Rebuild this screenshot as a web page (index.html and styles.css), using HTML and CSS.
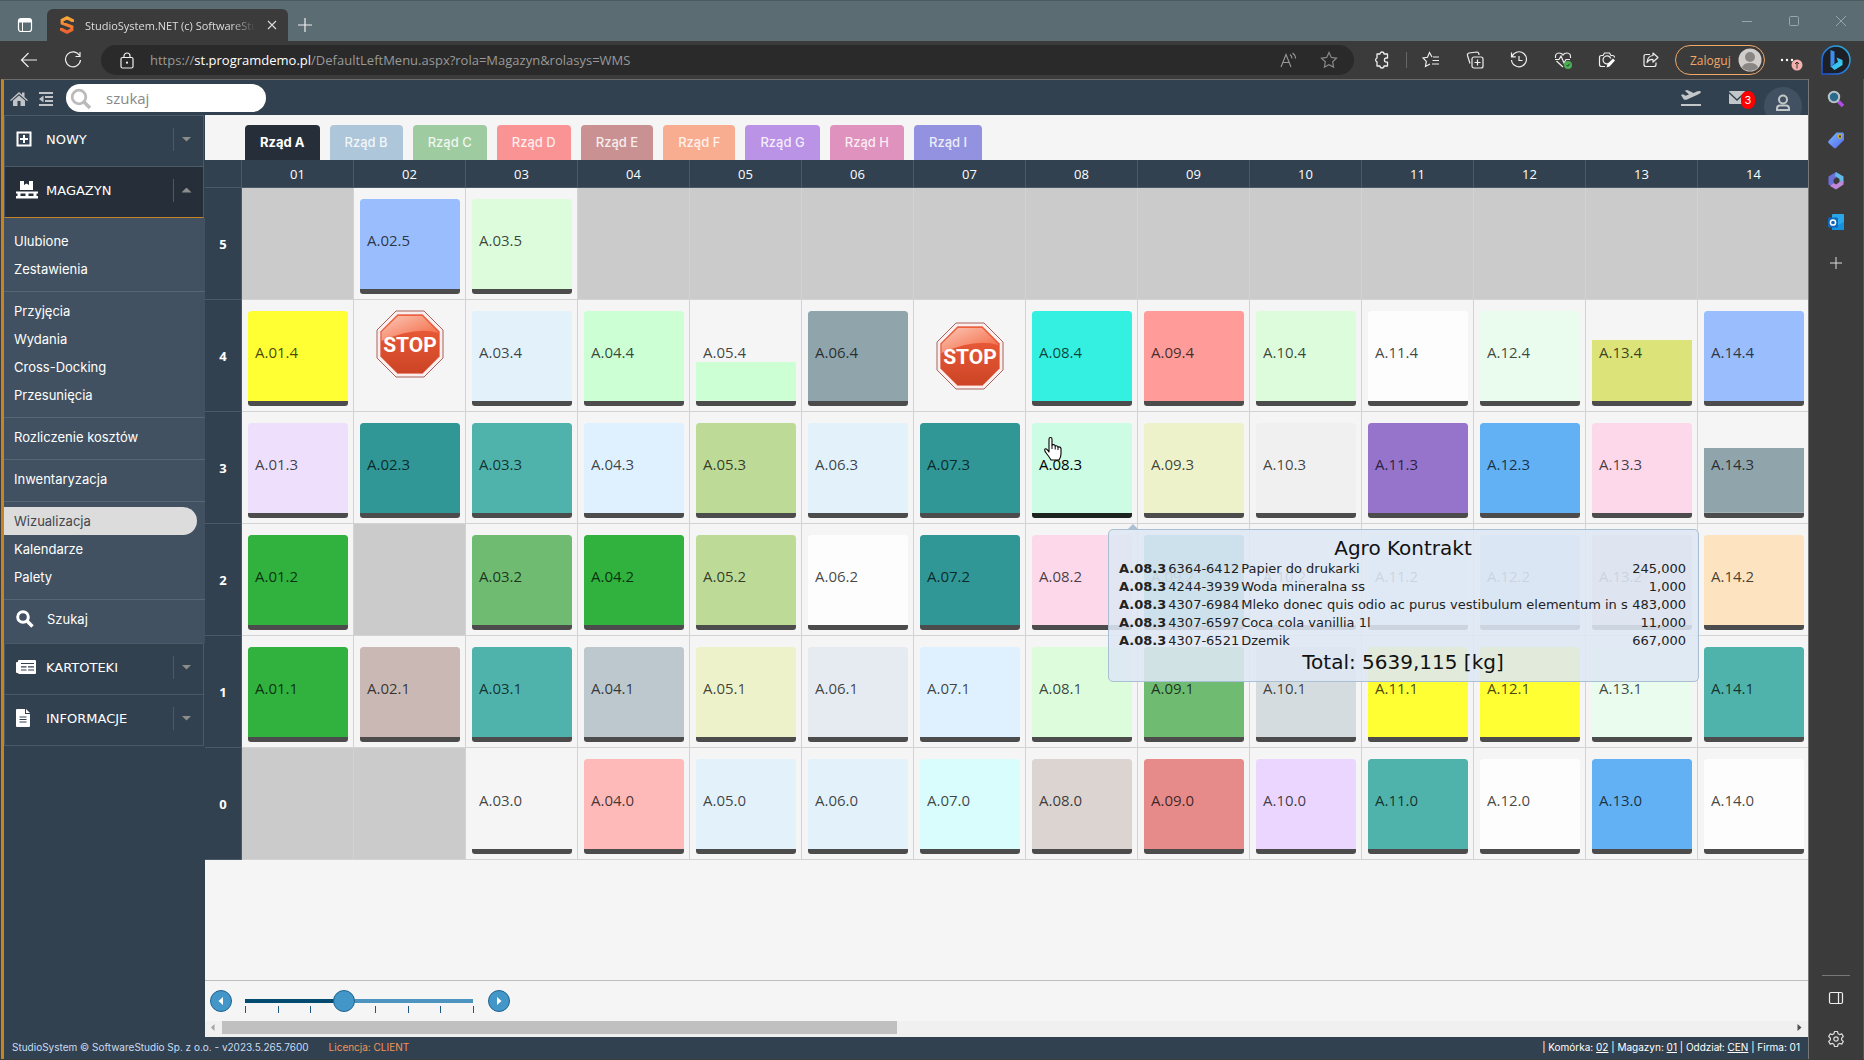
FILE: index.html
```html
<!DOCTYPE html>
<html lang="pl">
<head>
<meta charset="utf-8">
<title>StudioSystem.NET (c) SoftwareStudio</title>
<meta name="viewport" content="width=device-width, initial-scale=1">
<link rel="stylesheet" href="styles.css">
</head>
<body>
<div class="titlebar">
  <button class="icon-btn tab-menu" aria-label="Karty"><svg width="16" height="16" viewBox="0 0 16 16"><rect x="1.5" y="1.5" width="13" height="13" rx="2.5" fill="none" stroke="#fff" stroke-width="1.2"/><path d="M2 2h12v3.500H2z" fill="#fff"/><path d="M5.500 5v9" stroke="#fff"/></svg></button>
  <div class="tab">
    <svg width="14" height="18" viewBox="0 0 14 18"><defs><linearGradient id="fav" x1="0" y1="0" x2="0" y2="1"><stop offset="0" stop-color="#f8a838"/><stop offset="1" stop-color="#ee6030"/></linearGradient></defs><path d="M12.500 6V4.500L7 1.800 2.200 4.200v3l9.600 3.600v3L7 16.200l-5.500-2.700V12" fill="none" stroke="url(#fav)" stroke-width="3.200"/></svg>
    <span class="tab-title">StudioSystem.NET (c) SoftwareStudio</span>
    <button class="tab-close" aria-label="Zamknij kartę"><svg width="10" height="10" viewBox="0 0 10 10"><path d="M1 1l8 8M9 1L1 9" stroke="#ddd" stroke-width="1.100"/></svg></button>
  </div>
  <button class="icon-btn" aria-label="Nowa karta"><svg width="14" height="14" viewBox="0 0 14 14"><path d="M7 0v14M0 7h14" stroke="#eee" stroke-width="1.200"/></svg></button>
  <div class="window-controls">
    <button aria-label="Minimalizuj"><svg width="12" height="12" viewBox="0 0 12 12"><path d="M1 6.500h10" stroke="#9ba6a9"/></svg></button>
    <button aria-label="Maksymalizuj"><svg width="12" height="12" viewBox="0 0 12 12"><rect x="1.500" y="1.500" width="9" height="9" rx="1" fill="none" stroke="#9ba6a9"/></svg></button>
    <button aria-label="Zamknij"><svg width="12" height="12" viewBox="0 0 12 12"><path d="M1 1l10 10M11 1L1 11" stroke="#9ba6a9"/></svg></button>
  </div>
</div>

<div class="toolbar">
  <button class="icon-btn" aria-label="Wstecz"><svg width="18" height="16" viewBox="0 0 18 16"><path d="M17 8H1.500M8.500 1l-7 7 7 7" fill="none" stroke="#eee" stroke-width="1.200"/></svg></button>
  <button class="icon-btn" aria-label="Odśwież"><svg width="18" height="18" viewBox="0 0 18 18"><path d="M15.500 4.500A7.500 7.500 0 1 0 16.500 9M16 1v4.500h-4.500" fill="none" stroke="#eee" stroke-width="1.200"/></svg></button>
  <div class="address">
    <svg width="14" height="17" viewBox="0 0 14 17"><rect x="1" y="5.500" width="12" height="10.500" rx="1.500" fill="none" stroke="#eee" stroke-width="1.200"/><path d="M4 5.500V4a3 3 0 0 1 6 0v1.500" fill="none" stroke="#eee" stroke-width="1.200"/><circle cx="7" cy="10.700" r="1.100" fill="#eee"/></svg>
    <span class="url">https://<b>st.programdemo.pl</b>/DefaultLeftMenu.aspx?rola=Magazyn&amp;rolasys=WMS</span>
    <svg width="18" height="16" viewBox="0 0 18 16" fill="none" stroke="#999" stroke-width="1.100"><path d="M1 15L6 2.500 11 15M2.800 10.500h6.400M10 2.500q2 1.500 2 4M12.500 1q3 2 3 5.500"/></svg>
    <svg width="18" height="18" viewBox="0 0 18 18"><path d="M9 1.500l2.300 4.900 5.200.7-3.800 3.700.9 5.300L9 13.600l-4.600 2.500.9-5.300L1.500 7.100l5.200-.7z" fill="none" stroke="#888" stroke-width="1.200"/></svg>
  </div>
  <button class="icon-btn puzzle" aria-label="Rozszerzenia"><svg width="18" height="18" viewBox="0 0 18 18"><path d="M4 3h3a2 2 0 0 1 4 0h3.500v4h-1a2 2 0 0 0 0 4.200h1V15H11a2 2 0 0 1-4 0H4v-4.200a2 2 0 0 1 0-3.800z" fill="none" stroke="#eee" stroke-width="1.300" stroke-linejoin="round"/></svg></button>
  <span class="divider"></span>
  <button class="icon-btn" aria-label="Ulubione"><svg width="18" height="18" viewBox="0 0 18 18"><path d="M10 6L7.500 1.500 5.500 6.300 1 7l3.300 3.400-.8 5.100L8 13M11 6h6M10.500 9.500H17M10 13h7" fill="none" stroke="#eee" stroke-width="1.200"/></svg></button>
  <button class="icon-btn" aria-label="Kolekcje"><svg width="18" height="18" viewBox="0 0 18 18" fill="none" stroke="#eee" stroke-width="1.200"><rect x="6" y="6" width="11" height="11" rx="2"/><path d="M11.500 8.500v6M8.500 11.500h6M4 12.500L1.500 4.500Q1 2.500 3 2l8-1q2 0 2 3"/></svg></button>
  <button class="icon-btn" aria-label="Historia"><svg width="18" height="18" viewBox="0 0 18 18" fill="none" stroke="#eee" stroke-width="1.200"><path d="M2 5.500A7.500 7.500 0 1 1 1.500 9M1.500 1.500v4.300h4.300M9 5v4.500h3.500"/></svg></button>
  <button class="icon-btn" aria-label="Wydajność"><svg width="19" height="18" viewBox="0 0 19 18"><path d="M1.500 7Q1 2 5 2q3 0 4 2 1-2 4-2 4 0 3.500 5M2.500 10L9 16M1 8.500h4l2-3.500 3 7 2-3.500h4" fill="none" stroke="#eee" stroke-width="1.200"/><circle cx="14" cy="14" r="4" fill="#4caf50"/><path d="M12.500 14l1.200 1.200 2-2.500" fill="none" stroke="#234"/></svg></button>
  <button class="icon-btn" aria-label="Zrzut ekranu"><svg width="18" height="18" viewBox="0 0 18 18"><path d="M7 15.500H3.500q-2 0-2-2v-7q0-2 2-2H5L6.500 2h5L13 4.500h1.500q2 0 2 2M11.500 12a4 4 0 1 1 1.300-4.500" fill="none" stroke="#eee" stroke-width="1.200"/><path d="M8.500 16.500l1-3.500 5.500-5.500 2 2L11.500 15.500z" fill="#fff"/></svg></button>
  <button class="icon-btn" aria-label="Udostępnij"><svg width="18" height="18" viewBox="0 0 18 18"><path d="M8 3.500H4q-2 0-2 2v8q0 2 2 2h8q2 0 2-2v-2M11 2l5 4.500-5 4.500V8.500Q7 8 5 11.500 5.500 5 11 4.500z" fill="none" stroke="#eee" stroke-width="1.200" stroke-linejoin="round"/></svg></button>
  <button class="login">Zaloguj <svg width="24" height="24" viewBox="0 0 24 24"><circle cx="12" cy="12" r="11.500" fill="#d0cdca"/><circle cx="12" cy="9" r="5" fill="#8a8683"/><path d="M4 20q1-5 8-5t8 5q-8 6-16 0z" fill="#8a8683"/></svg></button>
  <button class="icon-btn" aria-label="Więcej"><svg width="28" height="24" viewBox="0 0 28 24"><circle cx="7" cy="12" r="1.200" fill="#fff"/><circle cx="12" cy="12" r="1.200" fill="#fff"/><circle cx="17" cy="12" r="1.200" fill="#fff"/><circle cx="22" cy="17" r="5.500" fill="#f4b0ac"/><path d="M22 20.500v-6M20 16l2-2 2 2" fill="none" stroke="#333"/></svg></button>
  <button class="icon-btn bing" aria-label="Bing"><svg width="32" height="32" viewBox="0 0 32 32"><defs><linearGradient id="bg1" x1="0" y1="1" x2="1" y2="0"><stop offset="0" stop-color="#1d50d8"/><stop offset="1" stop-color="#2fb4e0"/></linearGradient><linearGradient id="bg2" x1="0" y1="0" x2="1" y2="1"><stop offset="0" stop-color="#3a9cf0"/><stop offset="1" stop-color="#35dff0"/></linearGradient></defs><path d="M2 30V16A14 14 0 1 1 16 30z" fill="#1c2026" stroke="url(#bg1)" stroke-width="1.500"/><path d="M10.500 6l4 1.500v12l-4 3z" fill="#3b8df0"/><path d="M10.500 22.500l5-3 2.500-1.500-1.500-4.500 6 2.500v5l-8 5z" fill="url(#bg2)"/></svg></button>
</div>

<div class="workspace">
<div class="app">
  <header class="app-header">
    <a href="#" class="head-icon" aria-label="Start"><svg width="18" height="16" viewBox="0 0 18 16"><path d="M9 1l3 2.800V1.500h2.500v4.600L18 9.200 17 10 9 3 1 10 0 9.200zM3 9.600L9 4.500l6 5.100V15h-4.500v-5h-3v5H3z" fill="#c0c4c8"/></svg></a>
    <a href="#" class="head-icon" aria-label="Zwiń menu"><svg width="16" height="16" viewBox="0 0 16 16"><path d="M1 2h14M7 6h8M7 10h8M1 14h14" stroke="#c0c4c8" stroke-width="2"/><path d="M5.500 4.500v7L1 8z" fill="#c0c4c8"/></svg></a>
    <label class="search"><svg width="22" height="22" viewBox="0 0 22 22"><circle cx="9" cy="9" r="6.800" fill="none" stroke="#bbb" stroke-width="2.800"/><path d="M14 14l6 6" stroke="#bbb" stroke-width="3.600"/></svg><input type="text" placeholder="szukaj" aria-label="szukaj"></label>
    <div class="head-right">
      <svg width="22" height="18" viewBox="0 0 22 18"><path d="M1 16h20" stroke="#c4c7ca" stroke-width="2"/><path d="M1 6l2-.7 2.600 1.500L9 5.500 4.800 1.800 7.200 1l6.300 3L17.500 2.200q3-.8 3.500.8-.2 1.200-3 2.500L7 10.500q-2.500.9-3.500-.5z" fill="#c4c7ca"/></svg>
      <a href="#" class="mail" aria-label="Wiadomości"><svg width="16" height="14" viewBox="0 0 16 14"><rect width="16" height="13" rx="1" fill="#c4c7ca"/><path d="M0 1.500L8 9l8-7.500" fill="none" stroke="#324150" stroke-width="1.300"/></svg><span>3</span></a>
      <a href="#" class="user" aria-label="Użytkownik"><svg width="16" height="18" viewBox="0 0 16 18" fill="none" stroke="#c4c7ca" stroke-width="2"><circle cx="8" cy="5.500" r="4"/><path d="M2 14.500q0-3 3-3h6q3 0 3 3V16H2z"/></svg></a>
    </div>
  </header>

  <div class="body">
    <nav class="menu">
      <a href="#" class="menu-head"><svg width="16" height="16" viewBox="0 0 16 16"><path d="M1.500 1.500h13v13h-13z" fill="none" stroke="#fff" stroke-width="2"/><path d="M8 4v8M4 8h8" stroke="#fff" stroke-width="2"/></svg><span>NOWY</span><i class="caret"></i></a>
      <a href="#" class="menu-head open"><svg width="22" height="18" viewBox="0 0 22 18"><path d="M4 0h4v4l2.500-1.500L13 4V0h4v9H4zM0 10.500h22v2H0zM0 15h22v2.500H0zM1.500 12.500h3V15h-3zM9.500 12.500h3V15h-3zM17.500 12.500h3V15h-3z" fill="#fff"/></svg><span>MAGAZYN</span><i class="caret"></i></a>
      <div class="submenu">
        <div class="group first"><a href="#">Ulubione</a><a href="#">Zestawienia</a></div>
        <div class="group"><a href="#">Przyjęcia</a><a href="#">Wydania</a><a href="#">Cross-Docking</a><a href="#">Przesunięcia</a></div>
        <div class="group"><a href="#">Rozliczenie kosztów</a></div>
        <div class="group"><a href="#">Inwentaryzacja</a></div>
        <div class="group"><a href="#" class="current">Wizualizacja</a><a href="#">Kalendarze</a><a href="#">Palety</a></div>
        <div class="group last"><a href="#" class="find"><svg width="18" height="18" viewBox="0 0 18 18"><circle cx="7" cy="7" r="5.300" fill="none" stroke="#fff" stroke-width="3"/><path d="M11 11l5.500 5.500" stroke="#fff" stroke-width="3.400"/></svg><span>Szukaj</span></a></div>
      </div>
      <a href="#" class="menu-head"><svg width="20" height="14" viewBox="0 0 20 14"><rect x="0" y="2" width="3" height="11" rx="1" fill="#fff"/><rect x="2" y="0" width="18" height="14" rx="1" fill="#fff"/><path d="M5 3.500h13M5 6.800h5.500M12 6.800h6M5 10h5.500M12 10h6" stroke="#324150" stroke-width="1.200"/></svg><span>KARTOTEKI</span><i class="caret"></i></a>
      <a href="#" class="menu-head"><svg width="14" height="18" viewBox="0 0 14 18"><path d="M0 1q0-1 1-1h8v5h5v12q0 1-1 1H1q-1 0-1-1zM10 0l4 4h-4z" fill="#fff"/><path d="M3.500 8h7M3.500 10.500h7M3.500 13h7" stroke="#324150"/></svg><span>INFORMACJE</span><i class="caret"></i></a>
    </nav>

    <main>
      <div class="rows">
        <button class="row-tab active">Rząd A</button>
        <button class="row-tab b">Rząd B</button>
        <button class="row-tab c">Rząd C</button>
        <button class="row-tab d">Rząd D</button>
        <button class="row-tab e">Rząd E</button>
        <button class="row-tab f">Rząd F</button>
        <button class="row-tab g">Rząd G</button>
        <button class="row-tab h">Rząd H</button>
        <button class="row-tab i">Rząd I</button>
      </div>
      <div class="rack-view">
      <table class="rack">
        <thead><tr><th class="level"></th><th>01</th><th>02</th><th>03</th><th>04</th><th>05</th><th>06</th><th>07</th><th>08</th><th>09</th><th>10</th><th>11</th><th>12</th><th>13</th><th>14</th></tr></thead>
        <tbody>
        <tr><th class="level">5</th><td class="none"></td>
          <td><a href="#" class="slot" style="--c:#9abdfd">A.02.5</a></td>
          <td><a href="#" class="slot" style="--c:#dcfcdc">A.03.5</a></td>
          <td class="none"></td><td class="none"></td><td class="none"></td><td class="none"></td><td class="none"></td><td class="none"></td><td class="none"></td><td class="none"></td><td class="none"></td><td class="none"></td><td class="none"></td></tr>
        <tr><th class="level">4</th>
          <td><a href="#" class="slot" style="--c:#ffff33">A.01.4</a></td>
          <td class="blocked top"><svg class="stop" viewBox="0 0 68 68"><defs><linearGradient id="sg" x1="0" y1="0" x2="0" y2="1"><stop offset="0" stop-color="#f0603c"/><stop offset="1" stop-color="#cc4426"/></linearGradient><linearGradient id="sh" x1="0" y1="0" x2="1" y2="1"><stop offset="0" stop-color="#fcc8b8"/><stop offset="1" stop-color="#f26038"/></linearGradient></defs><path d="M20 1h28l19 19v28L48 67H20L1 48V20z" fill="#fbeeee" stroke="#a8625a"/><path d="M21.500 4.500h25l17 17v25l-17 17h-25l-17-17v-25z" fill="url(#sg)" stroke="#e98a78"/><path d="M22 6h24l16 16v1Q40 16 5.500 31V22z" fill="url(#sh)"/><text x="34" y="42">STOP</text></svg></td>
          <td><a href="#" class="slot" style="--c:#e3f1fb">A.03.4</a></td>
          <td><a href="#" class="slot" style="--c:#ccffd4">A.04.4</a></td>
          <td><a href="#" class="slot" style="--c:#ccffd4;--fill:43%">A.05.4</a></td>
          <td><a href="#" class="slot" style="--c:#90a4ac">A.06.4</a></td>
          <td class="blocked"><svg class="stop" viewBox="0 0 68 68"><path d="M20 1h28l19 19v28L48 67H20L1 48V20z" fill="#fbeeee" stroke="#a8625a"/><path d="M21.500 4.500h25l17 17v25l-17 17h-25l-17-17v-25z" fill="url(#sg)" stroke="#e98a78"/><path d="M22 6h24l16 16v1Q40 16 5.500 31V22z" fill="url(#sh)"/><text x="34" y="42">STOP</text></svg></td>
          <td><a href="#" class="slot" style="--c:#33f0e1">A.08.4</a></td>
          <td><a href="#" class="slot" style="--c:#ff9c9a">A.09.4</a></td>
          <td><a href="#" class="slot" style="--c:#dcfcdc">A.10.4</a></td>
          <td><a href="#" class="slot" style="--c:#fdfdfd">A.11.4</a></td>
          <td><a href="#" class="slot" style="--c:#e9fced">A.12.4</a></td>
          <td><a href="#" class="slot" style="--c:#dce378;--fill:68%">A.13.4</a></td>
          <td><a href="#" class="slot" style="--c:#9abdfd">A.14.4</a></td></tr>
        <tr><th class="level">3</th>
          <td><a href="#" class="slot" style="--c:#eee0fc">A.01.3</a></td>
          <td><a href="#" class="slot" style="--c:#309796">A.02.3</a></td>
          <td><a href="#" class="slot" style="--c:#4fb3ab">A.03.3</a></td>
          <td><a href="#" class="slot" style="--c:#dff0fe">A.04.3</a></td>
          <td><a href="#" class="slot" style="--c:#bddb97">A.05.3</a></td>
          <td><a href="#" class="slot" style="--c:#e3f1fb">A.06.3</a></td>
          <td><a href="#" class="slot" style="--c:#309796">A.07.3</a></td>
          <td class="hovered"><a href="#" class="slot" style="--c:#ccfce4">A.08.3</a>
            <svg class="pointer" width="20" height="26" viewBox="0 0 20 26"><path d="M6 14V3.200q0-1.700 1.500-1.700T9 3.200V9q2.500-1 3.200 1 2-.8 2.800 1 2.500-.5 3 1.500v5.500q0 3-2 6H8q-2-3.500-4.500-6.500T2 13q1.500-1 4 3z" fill="#fff" stroke="#000" stroke-width="1.100" stroke-linejoin="round"/><path d="M9 9v4M12.200 10v3.500M15 11v3" stroke="#000"/></svg>
            <div class="tip" role="tooltip">
              <div class="tip-title">Agro Kontrakt</div>
              <table class="tip-lines">
                <tr><td><b>A.08.3</b></td><td>6364-6412</td><td class="name">Papier do drukarki</td><td class="qty">245,000</td></tr>
                <tr><td><b>A.08.3</b></td><td>4244-3939</td><td class="name">Woda mineralna ss</td><td class="qty">1,000</td></tr>
                <tr><td><b>A.08.3</b></td><td>4307-6984</td><td class="name">Mleko donec quis odio ac purus vestibulum elementum in s</td><td class="qty">483,000</td></tr>
                <tr><td><b>A.08.3</b></td><td>4307-6597</td><td class="name">Coca cola vanillia 1l</td><td class="qty">11,000</td></tr>
                <tr><td><b>A.08.3</b></td><td>4307-6521</td><td class="name">Dzemik</td><td class="qty">667,000</td></tr>
              </table>
              <div class="tip-title">Total: 5639,115 [kg]</div>
            </div></td>
          <td><a href="#" class="slot" style="--c:#eef2cb">A.09.3</a></td>
          <td><a href="#" class="slot" style="--c:#f0f0f0">A.10.3</a></td>
          <td><a href="#" class="slot" style="--c:#9674cc">A.11.3</a></td>
          <td><a href="#" class="slot" style="--c:#63b1f5">A.12.3</a></td>
          <td><a href="#" class="slot" style="--c:#fdd8ea">A.13.3</a></td>
          <td><a href="#" class="slot" style="--c:#90a4ac;--fill:72%">A.14.3</a></td></tr>
        <tr><th class="level">2</th>
          <td><a href="#" class="slot" style="--c:#31b13e">A.01.2</a></td>
          <td class="none"></td>
          <td><a href="#" class="slot" style="--c:#6fbb71">A.03.2</a></td>
          <td><a href="#" class="slot" style="--c:#31b13e">A.04.2</a></td>
          <td><a href="#" class="slot" style="--c:#bddb97">A.05.2</a></td>
          <td><a href="#" class="slot" style="--c:#fdfdfd">A.06.2</a></td>
          <td><a href="#" class="slot" style="--c:#309796">A.07.2</a></td>
          <td><a href="#" class="slot" style="--c:#fdd8ea">A.08.2</a></td>
          <td><a href="#" class="slot" style="--c:#4fb3ab">A.09.2</a></td>
          <td><a href="#" class="slot" style="--c:#f0f4fa">A.10.2</a></td>
          <td><a href="#" class="slot" style="--c:#e3f1fb">A.11.2</a></td>
          <td><a href="#" class="slot" style="--c:#c4dcff">A.12.2</a></td>
          <td><a href="#" class="slot" style="--c:#dbd4d8">A.13.2</a></td>
          <td><a href="#" class="slot" style="--c:#fde3bf">A.14.2</a></td></tr>
        <tr><th class="level">1</th>
          <td><a href="#" class="slot" style="--c:#31b13e">A.01.1</a></td>
          <td><a href="#" class="slot" style="--c:#c9b8b3">A.02.1</a></td>
          <td><a href="#" class="slot" style="--c:#4fb3ab">A.03.1</a></td>
          <td><a href="#" class="slot" style="--c:#bcc7ce">A.04.1</a></td>
          <td><a href="#" class="slot" style="--c:#eef2cb">A.05.1</a></td>
          <td><a href="#" class="slot" style="--c:#e6ebf2">A.06.1</a></td>
          <td><a href="#" class="slot" style="--c:#dff0fe">A.07.1</a></td>
          <td><a href="#" class="slot" style="--c:#dcfcdc">A.08.1</a></td>
          <td><a href="#" class="slot" style="--c:#6fbb71">A.09.1</a></td>
          <td><a href="#" class="slot" style="--c:#d5dcdf">A.10.1</a></td>
          <td><a href="#" class="slot" style="--c:#ffff33">A.11.1</a></td>
          <td><a href="#" class="slot" style="--c:#ffff33">A.12.1</a></td>
          <td><a href="#" class="slot" style="--c:#e9fced">A.13.1</a></td>
          <td><a href="#" class="slot" style="--c:#4fb3ab">A.14.1</a></td></tr>
        <tr><th class="level">0</th><td class="none"></td><td class="none"></td>
          <td><a href="#" class="slot" style="--c:#f5f5f5">A.03.0</a></td>
          <td><a href="#" class="slot" style="--c:#feb9b9">A.04.0</a></td>
          <td><a href="#" class="slot" style="--c:#e3f1fb">A.05.0</a></td>
          <td><a href="#" class="slot" style="--c:#e3f1fb">A.06.0</a></td>
          <td><a href="#" class="slot" style="--c:#d9fcfd">A.07.0</a></td>
          <td><a href="#" class="slot" style="--c:#dbd4d1">A.08.0</a></td>
          <td><a href="#" class="slot" style="--c:#e68b8a">A.09.0</a></td>
          <td><a href="#" class="slot" style="--c:#ead6fe">A.10.0</a></td>
          <td><a href="#" class="slot" style="--c:#4fb3ab">A.11.0</a></td>
          <td><a href="#" class="slot" style="--c:#fdfdfd">A.12.0</a></td>
          <td><a href="#" class="slot" style="--c:#63b1f5">A.13.0</a></td>
          <td><a href="#" class="slot" style="--c:#fdfdfd">A.14.0</a></td></tr>
        </tbody>
      </table>
      </div>
      <div class="zoom">
        <button class="step" aria-label="Pomniejsz"><svg width="8" height="10" viewBox="0 0 8 10"><path d="M6 1v8L1.500 5z" fill="#fff"/></svg></button>
        <div class="slider">
          <input type="range" min="0" max="7" value="3" aria-label="Skala">
          <div class="ticks"><i></i><i></i><i></i><i></i><i></i><i></i><i></i><i></i></div>
        </div>
        <button class="step" aria-label="Powiększ"><svg width="8" height="10" viewBox="0 0 8 10"><path d="M2 1v8l4.500-4z" fill="#fff"/></svg></button>
      </div>
      <div class="scrollbar"><svg width="17" height="13" viewBox="0 0 17 13"><path d="M9.500 3v7L6 6.500z" fill="#a3a3a3"/></svg><div class="lane"><div class="thumb" style="width:43%"></div></div><svg width="17" height="13" viewBox="0 0 17 13"><path d="M6.500 3v7l4-3.500z" fill="#505050"/></svg></div>
    </main>
  </div>

  <footer>
    <span>StudioSystem © SoftwareStudio Sp. z o.o. - v2023.5.265.7600</span>
    <span class="licence">Licencja: CLIENT</span>
    <span class="context">| Komórka: <a href="#">02</a> | Magazyn: <a href="#">01</a> | Oddział: <a href="#">CEN</a> | Firma: 01</span>
  </footer>
</div>

<aside class="rail">
  <button aria-label="Szukaj"><svg width="18" height="18" viewBox="0 0 18 18"><path d="M11 11l5 5" stroke="#b44be8" stroke-width="3.500"/><circle cx="7" cy="7" r="5.200" fill="#2a6a8c" stroke="#b8c4c8" stroke-width="2"/></svg></button>
  <button aria-label="Zakupy"><svg width="18" height="18" viewBox="0 0 18 18"><defs><linearGradient id="tg" x1="0" y1="0" x2="1" y2="1"><stop offset="0" stop-color="#7ab8f8"/><stop offset="1" stop-color="#5468f0"/></linearGradient></defs><path d="M9.500 1.500H16l1 1V9l-8 8q-1 .8-2 0L1.500 12q-.8-1 0-2z" fill="url(#tg)"/><circle cx="13" cy="5.500" r="1.800" fill="#444" stroke="#d8b428" stroke-width="1.200"/></svg></button>
  <button aria-label="Microsoft 365"><svg width="18" height="18" viewBox="0 0 18 18"><path d="M9 0L1.500 4.500v8L5 14.500 7 11V7l5-3.500z" fill="#6a70d8"/><path d="M9 0l7.500 4.500v6L12.500 9.500V7L8 4z" fill="#62b8e8"/><path d="M16.500 9v3.500L9 17.500 3 14l4-3 2 1.500 4-3z" fill="#c088d8"/><path d="M9 6.200l2.500 1.500v2.800L9 12l-2.500-1.500V7.700z" fill="#3b3b3b"/></svg></button>
  <button aria-label="Outlook"><svg width="18" height="18" viewBox="0 0 18 18"><rect x="5" y="1" width="12" height="15" rx="1" fill="#28a8ea"/><path d="M5 9l6 3 6-3v8H5z" fill="#1490df"/><rect x="1" y="4.500" width="10" height="10" rx="1.200" fill="#0f66bb"/><circle cx="6" cy="9.500" r="2.600" fill="none" stroke="#fff" stroke-width="1.500"/></svg></button>
  <button aria-label="Dodaj"><svg width="14" height="14" viewBox="0 0 14 14"><path d="M7 1v12M1 7h12" stroke="#ddd"/></svg></button>
  <span class="spacer"></span>
  <button aria-label="Panel boczny"><svg width="16" height="14" viewBox="0 0 16 14" fill="none" stroke="#eee" stroke-width="1.200"><rect x="1.500" y="1.500" width="13" height="11" rx="1.500"/><path d="M10.500 1.500v11"/></svg></button>
  <button aria-label="Ustawienia"><svg width="18" height="18" viewBox="0 0 18 18" fill="none" stroke="#ddd" stroke-width="1.200"><path d="M7.500 1.500h3l.6 2.300 1.400.8 2.300-.7 1.500 2.600L14.600 8.200v1.600l1.700 1.700-1.500 2.600-2.300-.7-1.400.8-.6 2.300h-3l-.6-2.300-1.400-.8-2.300.7-1.500-2.600 1.700-1.700V8.200L1.700 6.500l1.500-2.600 2.300.7 1.400-.8z" stroke-linejoin="round"/><circle cx="9" cy="9" r="2.200"/></svg></button>
</aside>
</div>
</body>
</html>
```
FILE: styles.css
```css
* { box-sizing: border-box; }

:root {
  --navy: #324150;
  --navy-dark: #262f39;
  --slate: #415161;
  --line: #4a5a66;
  --chrome: #3b3b3b;
  --ui: "Open Sans", "Noto Sans", sans-serif;
  --brand: "Inter", "Open Sans", sans-serif;
  --wide: "DejaVu Sans", sans-serif;
}

body {
  margin: 0;
  min-height: 100vh;
  display: flex;
  flex-direction: column;
  font-family: var(--ui);
  background: var(--chrome);
  overflow-x: hidden;
}

a { color: inherit; text-decoration: none; }
svg { display: block; flex: none; }
button {
  font: inherit;
  color: inherit;
  border: 0;
  padding: 0;
  background: none;
  cursor: pointer;
}

/* Browser window */
.titlebar {
  height: 41px;
  display: flex;
  align-items: center;
  background: #5b6c72;
  border-top: 1px solid #4d5a5e;
  padding-left: 2px;
}
.icon-btn {
  width: 44px;
  height: 36px;
  flex: none;
  display: grid;
  place-items: center;
}
.titlebar .icon-btn { width: 34px; margin-top: 8px; }
.titlebar .tab-menu { width: 45px; }
.tab {
  align-self: flex-end;
  width: 241px;
  height: 32px;
  display: flex;
  align-items: center;
  gap: 11px;
  padding: 0 11px 0 13px;
  background: var(--chrome);
  border-radius: 6px 6px 0 0;
}
.tab-title {
  flex: 1;
  overflow: hidden;
  white-space: nowrap;
  font-size: 11px;
  color: #ddd;
  -webkit-mask-image: linear-gradient(to right, #000 85%, transparent);
  mask-image: linear-gradient(to right, #000 85%, transparent);
}
.tab-close svg { width: 10px; }
.window-controls { margin-left: auto; display: flex; }
.window-controls button { width: 47px; height: 40px; display: grid; place-items: center; }

.toolbar {
  height: 38px;
  display: flex;
  align-items: center;
  padding: 0 6px 0 7px;
  background: var(--chrome);
  color: #eee;
}
.address {
  flex: 1;
  min-width: 0;
  height: 30px;
  margin: 0 6px;
  padding: 0 16px 0 19px;
  display: flex;
  align-items: center;
  gap: 22px;
  border-radius: 15px;
  background: #2a2a2a;
}
.url {
  flex: 1;
  min-width: 0;
  overflow: hidden;
  white-space: nowrap;
  margin-left: -6px;
  font-size: 13px;
  color: #999;
}
.url b { font-weight: 400; color: #fff; }
.toolbar .divider { width: 1px; height: 16px; margin: 0 2px; background: #666; }
.login {
  width: 90px;
  height: 30px;
  margin: 0 2px;
  padding: 0 2px 0 14px;
  display: flex;
  align-items: center;
  justify-content: space-between;
  border: 1px solid #f0a868;
  border-radius: 15px;
  font-size: 12px;
  color: #f0a868;
}
.bing { margin-left: 3px; }

.workspace { flex: 1; display: flex; padding: 0 0 1px 1px; }
.rail {
  width: 56px;
  flex: none;
  display: flex;
  flex-direction: column;
  align-items: center;
  border-left: 1px solid #777;
  border-right: 1px solid #555;
}
.rail button { width: 40px; height: 40px; display: grid; place-items: center; }
.rail button + button { margin-top: 1px; }
.rail .spacer { flex: 1; width: 28px; border-bottom: 1px solid #777; margin-bottom: 2px; }

/* Application */
.app {
  flex: 1;
  min-width: 0;
  display: flex;
  flex-direction: column;
  border-top: 1px solid #6b6b6b;
  border-left: 3px solid #c68426;
  background: var(--navy);
}
.app-header {
  height: 35px;
  display: flex;
  align-items: center;
  padding: 0 6px;
  overflow: hidden;
}
.head-icon { width: 28px; margin-top: 3px; display: block; }
.search {
  width: 200px;
  height: 28px;
  display: flex;
  align-items: center;
  gap: 12px;
  padding: 0 12px 0 4px;
  border-radius: 14px;
  background: #fff;
}
.search svg { margin-top: 2px; }
.search input {
  flex: 1;
  min-width: 0;
  border: 0;
  outline: 0;
  background: none;
  font: 15px var(--ui);
}
.search input::placeholder { color: #888; }
.head-right { margin-left: auto; height: 35px; display: flex; align-items: center; gap: 27px; }
.mail { display: flex; align-items: center; }
.mail span {
  height: 18px;
  width: 14px;
  margin: 4px -18px 0 -4px;
  border-radius: 7px;
  background: #f00;
  color: #fff;
  font: 11px/18px var(--brand);
  text-align: center;
}
.user {
  width: 38px;
  height: 38px;
  margin-top: 17px;
  display: grid;
  place-items: center;
  padding-bottom: 6px;
  border-radius: 50%;
  background: var(--slate);
}

.body { flex: 1; display: flex; min-height: 0; }

.menu { width: 201px; flex: none; color: #fff; }
.menu-head {
  height: 51px;
  display: flex;
  align-items: center;
  margin-right: 1px;
  padding: 0 0 4px 11px;
  border: 1px solid var(--line);
  border-bottom-width: 0;
  font: 13px var(--wide);
}
.menu-head:last-child { height: 52px; border-bottom-width: 1px; }
.menu-head span { flex: 1; }
.menu-head > svg { margin-right: 8px; }
.menu-head > svg[width="16"] { margin-right: 14px; }
.menu-head > svg[width="20"] { margin-right: 10px; }
.menu-head > svg[width="14"] { margin-right: 16px; }
.menu-head.open { height: 52px; background: var(--navy-dark); border-bottom: 1px solid #c68426; }
.caret { width: 30px; height: 23px; display: grid; place-items: center; padding-right: 4px; border-left: 1px solid var(--line); }
.caret::before {
  content: "";
  width: 10px;
  height: 5px;
  background: #8d8d8d;
  clip-path: polygon(0 0, 100% 0, 50% 100%);
}
.open .caret::before { clip-path: polygon(0 100%, 100% 100%, 50% 0); }

.submenu { background: var(--slate); font: 13px/28px var(--brand); }
.group { padding: 5px 0 8px; border-bottom: 1px solid #566674; }
.group.first { padding-top: 9px; }
.group.last { padding-bottom: 10px; border: 0; }
.group a { display: block; padding-left: 10px; }
.group .current {
  width: 193px;
  background: #dcdcdc;
  color: #40454a;
  border-radius: 0 14px 14px 0;
}
.group .find { display: flex; align-items: center; gap: 13px; padding-left: 12px; }

main { flex: 1; min-width: 0; display: flex; flex-direction: column; background: #f5f5f5; }
.rows { height: 45px; flex: none; display: flex; align-items: flex-end; gap: 10px; padding-left: 40px; }
.row-tab {
  height: 35px;
  padding: 0 15px 2px;
  border-radius: 4px 4px 0 0;
  font: 500 13px var(--brand);
  color: rgba(255, 255, 255, 0.85);
}
.row-tab.active { background: var(--navy-dark); color: #fff; font-weight: 700; }
.row-tab.b { background: #aec6da; }
.row-tab.c { background: #9fcba1; }
.row-tab.d { background: #fa9394; }
.row-tab.e { background: #ca9192; }
.row-tab.f { background: #f9ad90; }
.row-tab.g { background: #ba92e6; }
.row-tab.h { background: #de92bd; }
.row-tab.i { background: #9292e0; }

.rack-view { flex: 1; overflow: hidden; }
.rack { width: 1605px; table-layout: fixed; border-collapse: separate; border-spacing: 0; }
.rack thead th {
  height: 28px;
  padding: 0;
  background: var(--navy);
  color: #fff;
  font: 13px var(--ui);
  border-right: 1px solid var(--line);
  border-bottom: 1px solid var(--line);
}
.rack .level {
  width: 37px;
  padding: 0;
  background: var(--navy);
  color: #fff;
  font: 700 13px var(--ui);
  border-right: 1px solid var(--line);
  border-bottom: 1px solid var(--line);
}
.rack tbody td {
  height: 112px;
  padding: 11px 5px 5px 6px;
  vertical-align: top;
  border-right: 1px solid #d3d3d3;
  border-bottom: 1px solid #d3d3d3;
}
.rack tbody .none { background: #cbcbcb; }
.slot {
  --fill: 100%;
  display: block;
  height: 95px;
  padding-left: 7px;
  border-bottom: 5px solid #4c4c4c;
  border-radius: 3px;
  background: linear-gradient(var(--c), var(--c)) bottom / 100% var(--fill) no-repeat padding-box;
  font-size: 15px;
  line-height: 83px;
  color: rgba(0, 0, 0, 0.74);
}
.rack tbody .blocked { padding: 0; vertical-align: middle; }
.rack tbody .blocked.top { padding-top: 10px; vertical-align: top; }
.stop { width: 68px; height: 68px; margin: 0 auto; }
.stop text {
  font: 700 21px "Roboto", "Liberation Sans", sans-serif;
  fill: #fff;
  text-anchor: middle;
}

/* Contents of the slot under the pointer */
.hovered { position: relative; }
.hovered .slot { color: #000; border-bottom-color: #1c2420; }
.pointer { position: absolute; left: 17px; top: 24px; z-index: 2; }
.tip {
  position: absolute;
  left: 82px;
  top: 117px;
  z-index: 3;
  width: 591px;
  padding: 6px 11px 7px 10px;
  border: 1px solid #a9bfd3;
  border-radius: 5px;
  background: rgba(222, 231, 244, 0.88);
  font-family: var(--wide);
  color: #111;
}
.tip::before {
  content: "";
  position: absolute;
  left: 18px;
  top: -6px;
  width: 12px;
  height: 6px;
  background: #a9bfd3;
  clip-path: polygon(50% 0, 100% 100%, 0 100%);
}
.tip-title { font-size: 20px; line-height: 24px; text-align: center; }
.tip-lines { width: 100%; border-collapse: collapse; font-size: 13px; line-height: 18px; color: #222; }
.rack .tip-lines td { height: 18px; padding: 0 2px 0 0; border: 0; white-space: nowrap; }
.rack .tip-lines .name { width: 100%; }
.rack .tip-lines .qty { text-align: right; padding: 0 1px 0 0; }

.zoom { height: 41px; display: flex; align-items: center; gap: 3px; padding-left: 5px; border-top: 1px solid #bdbdbd; }
.step {
  width: 22px;
  height: 22px;
  display: grid;
  place-items: center;
  border: 1px solid #1d6390;
  border-radius: 50%;
  background: #4296c8;
}
.slider { display: grid; align-items: center; }
.slider > * { grid-area: 1 / 1; }
.slider input {
  -webkit-appearance: none;
  appearance: none;
  width: 250px;
  height: 22px;
  margin: 0;
  background:
    linear-gradient(#034a70, #034a70) 10px center / 98px 4px no-repeat,
    linear-gradient(#4e94c1, #4e94c1) 10px center / 228px 4px no-repeat;
}
.slider input::-webkit-slider-thumb {
  -webkit-appearance: none;
  width: 22px;
  height: 22px;
  border: 1px solid #1d6390;
  border-radius: 50%;
  background: #4296c8;
}
.ticks { display: flex; justify-content: space-between; margin: 17px 11px 0 10px; pointer-events: none; }
.ticks i { width: 1px; height: 7px; background: #1d5a80; }
.ticks i:nth-child(4) { visibility: hidden; }

.scrollbar { height: 16px; flex: none; display: flex; background: #f0f0f0; }
.lane { flex: 1; }
.thumb { height: 13px; background: #c0c0c0; }

footer {
  height: 22px;
  flex: none;
  display: flex;
  align-items: center;
  gap: 20px;
  padding: 0 8px 2px;
  font: 10px var(--brand);
  color: #c9dcf2;
}
.licence { color: #f0945a; }
.context { margin-left: auto; color: #fff; }
.context a { text-decoration: underline; }
```
